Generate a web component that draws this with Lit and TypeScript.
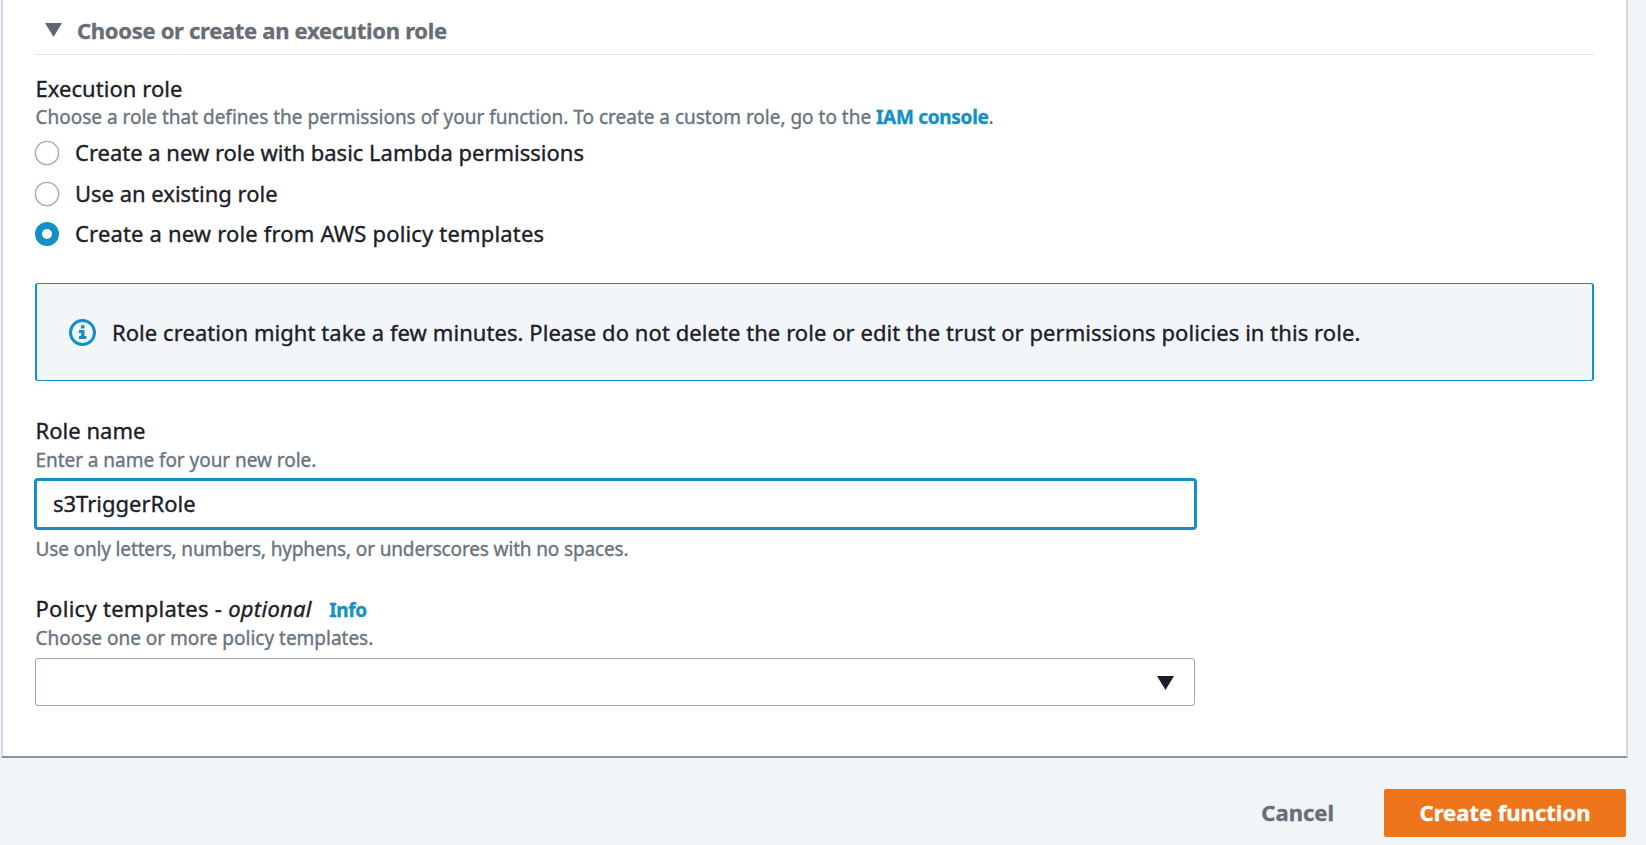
import { LitElement, html, css } from "lit";
import { customElement, state } from "lit/decorators.js";
import { classMap } from "lit/directives/class-map.js";

const ROLE_OPTIONS = [
  { label: "Create a new role with basic Lambda permissions", cls: "basic" },
  { label: "Use an existing role", cls: "existing" },
  { label: "Create a new role from AWS policy templates", cls: "templates" },
];

@customElement("app-root")
export class AppRoot extends LitElement {
  @state() private selected = 2;

  static styles = css`
    :host {
      display: block;
      height: 845px;
      overflow: hidden;
      background: #f1f5f8;
      color: #1b2028;
      font: 22px/30px "Noto Sans", "Open Sans", sans-serif;
      -webkit-text-stroke: 0.35px currentColor;
    }
    * { box-sizing: border-box; }
    .card {
      height: 758px;
      margin: 0 18px 0 1px;
      padding: 15px 32px 0;
      background: #fff;
      border: 2px solid #d1dae0;
      border-top: 0;
      border-bottom-color: #87949b;
    }
    .title {
      display: flex;
      align-items: center;
      height: 40px;
      padding: 0 0 10px 10px;
      border-bottom: 1px solid #e1e8ed;
      color: #676e76;
      font-weight: 700;
      letter-spacing: -0.31px;
    }
    .title svg { width: 17px; height: 14px; margin-right: 15px; }
    .section { padding-top: 18px; }
    .label { height: 30px; line-height: 28px; padding-left: 0.5px; white-space: nowrap; letter-spacing: 0.03px; }
    .section .label { line-height: 30px; letter-spacing: 0.05px; }
    .hint {
      height: 26px;
      margin-top: 1px;
      padding-left: 0.5px;
      color: #697480;
      font-size: 19px;
      line-height: 26px;
      white-space: nowrap;
      letter-spacing: -0.01px;
    }
    .link { color: #1390c5; font-weight: 700; letter-spacing: -0.3px; }
    .radios { display: grid; row-gap: 10.7px; margin-top: 8px; }
    .radio { display: flex; align-items: center; gap: 16px; height: 30px; cursor: pointer; letter-spacing: -0.01px; }
    .radio .text { padding-bottom: 2px; }
    .templates { letter-spacing: 0.165px; }
    .dot { width: 24px; height: 24px; border: 1.5px solid #9baab1; border-radius: 50%; background: #fff; box-shadow: 0 0 0 0.3px #9baab1; }
    .dot.on { border: 7px solid #1390c5; box-shadow: none; }
    .alert {
      display: flex;
      align-items: center;
      height: 98px;
      margin-top: 34px;
      padding-left: 32px;
      border: solid #1390c5;
      border-width: 1px 2px;
      border-radius: 3px;
      background: #f3f6f9;
      letter-spacing: 0.063px;
      white-space: nowrap;
    }
    .alert svg { width: 27px; height: 27px; margin-right: 16px; }
    .alert .text { padding-bottom: 1px; }
    .name { padding-top: 35px; }
    .name .hint { letter-spacing: -0.05px; }
    .name .hint.rule { margin-top: 6px; letter-spacing: -0.145px; }
    .input {
      display: block;
      width: 1163px;
      height: 52px;
      margin: 5px 0 0 -1px;
      padding: 0 0 2px 16px;
      border: 3px solid #1390c5;
      border-radius: 4px;
      outline: none;
      background: #fff;
      color: inherit;
      font: inherit;
      letter-spacing: 0;
      -webkit-text-stroke: inherit;
    }
    .policy { padding-top: 32px; }
    .policy .label { letter-spacing: 0.28px; }
    .optional { font-style: italic; }
    .label .info { margin-left: 11.5px; font-size: 19px; letter-spacing: -0.4px; }
    .select {
      display: flex;
      align-items: center;
      justify-content: flex-end;
      width: 1160px;
      height: 48px;
      margin-top: 7px;
      padding: 1px 20px 0 0;
      border: 1.5px solid #99a7ae;
      border-radius: 3px;
    }
    .select svg { width: 17px; height: 14px; }
    .actions {
      display: flex;
      justify-content: flex-end;
      gap: 50px;
      padding: 31px 20px 0 0;
    }
    .btn {
      height: 48px;
      padding: 0 0 2px;
      border: 0;
      background: none;
      color: #676e76;
      font: inherit;
      font-weight: 700;
      -webkit-text-stroke: inherit;
    }
    .btn.primary { width: 242px; border-radius: 2px; background: #ed751b; color: #fff; }
  `;

  render() {
    return html`
      <main class="card">
        <div class="title">
          <svg viewBox="0 0 17 14"><path d="M0 0H17L8.5 14Z" fill="#5f666d" /></svg>
          Choose or create an execution role
        </div>
        <section class="section">
          <div class="label">Execution role</div>
          <div class="hint">Choose a role that defines the permissions of your function. To create a custom role, go to the <span class="link">IAM console</span>.</div>
          <div class="radios" role="radiogroup">
            ${ROLE_OPTIONS.map(
              (o, i) => html`<div class="radio ${o.cls}" role="radio" aria-checked=${this.selected === i} @click=${() => (this.selected = i)}>
                <span class=${classMap({ dot: true, on: this.selected === i })}></span><span class="text">${o.label}</span>
              </div>`
            )}
          </div>
        </section>
        <div class="alert">
          <svg viewBox="0 0 27 27" fill="none">
            <circle cx="13.5" cy="13.5" r="12" stroke="#1390c5" stroke-width="3" />
            <path d="M11.9 6.3h3.6v3.2h-3.6zM10 11.1h5.5v6h1.9v2.9H10v-2.9h2v-3.1h-2z" fill="#1390c5" />
          </svg>
          <span class="text">Role creation might take a few minutes. Please do not delete the role or edit the trust or permissions policies in this role.</span>
        </div>
        <section class="name">
          <div class="label">Role name</div>
          <div class="hint">Enter a name for your new role.</div>
          <input class="input" .value=${"s3TriggerRole"} spellcheck="false" />
          <div class="hint rule">Use only letters, numbers, hyphens, or underscores with no spaces.</div>
        </section>
        <section class="policy">
          <div class="label">Policy templates - <span class="optional">optional</span> <span class="link info">Info</span></div>
          <div class="hint">Choose one or more policy templates.</div>
          <div class="select"><svg viewBox="0 0 17 14"><path d="M0 0H17L8.5 14Z" fill="#1b2028" /></svg></div>
        </section>
      </main>
      <footer class="actions">
        <button class="btn">Cancel</button>
        <button class="btn primary">Create function</button>
      </footer>
    `;
  }
}
